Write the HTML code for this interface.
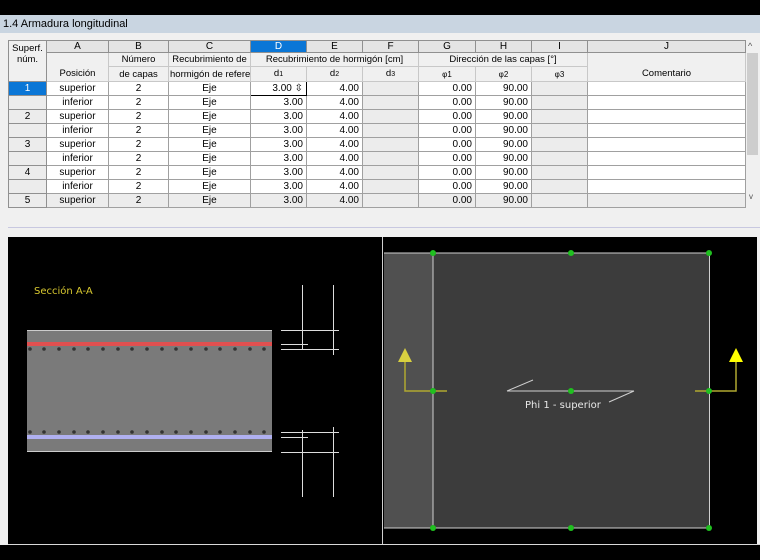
<!DOCTYPE html>
<html><head><meta charset="utf-8"><style>
*{margin:0;padding:0;box-sizing:border-box}
body{width:760px;height:560px;background:#000;position:relative;overflow:hidden;font-family:"Liberation Sans",sans-serif;font-size:10px;color:#000}
#title{position:absolute;left:0;top:15px;width:760px;height:18px;background:#c9d5e1;font-size:11px;line-height:18px;padding-left:3px}
#panel{position:absolute;left:0;top:33px;width:760px;height:512px;background:#f0f0f0}
table{position:absolute;left:8px;top:40px;width:737px;border-collapse:collapse;table-layout:fixed}
td{border:1px solid #a0a0a0;height:13.8px;padding:0 3px;white-space:nowrap;overflow:hidden;line-height:13px;text-align:center;background:#fff}
td.r{text-align:right}
td.g{background:#ececec}
td.h{background:#f0f0f0;border-color:#c8c8c8;font-size:9.5px;height:14px;padding:0 1px}
tr.L td{background:#e4e4e4;height:12px;line-height:11px;border-color:#909090}
td.sel{background:#0a76d6!important;color:#fff}
td.rh{background:#ececec;border-color:#909090}
#sb{position:absolute;left:746px;top:40px;width:13px;height:164px;background:#f0f0f0}
#sbt{position:absolute;left:747px;top:53px;width:11px;height:102px;background:#cdcdcd}
#sep{position:absolute;left:8px;top:227px;width:752px;height:1px;background:#c8c8e0}
svg{position:absolute;left:0;top:0}
</style></head><body>
<div id="title">1.4 Armadura longitudinal</div>
<div id="panel"></div>
<table>
<colgroup><col style="width:38px"><col style="width:62px"><col style="width:60px"><col style="width:82px"><col style="width:56px"><col style="width:56px"><col style="width:56px"><col style="width:57px"><col style="width:56px"><col style="width:56px"><col style="width:158px"></colgroup>
<tr class="L"><td rowspan="3" class="h" style="vertical-align:top;line-height:11px;padding-top:2px;background:#f0f0f0">Superf.<br>núm.</td><td>A</td><td>B</td><td>C</td><td class="sel">D</td><td>E</td><td>F</td><td>G</td><td>H</td><td>I</td><td>J</td></tr>
<tr><td class="h" rowspan="2" style="vertical-align:bottom;padding-bottom:1px">Posición</td><td class="h">Número</td><td class="h">Recubrimiento de</td><td class="h" colspan="3">Recubrimiento de hormigón [cm]</td><td class="h" colspan="3">Dirección de las capas [°]</td><td class="h" rowspan="2" style="vertical-align:bottom;padding-bottom:1px">Comentario</td></tr>
<tr><td class="h">de capas</td><td class="h">hormigón de referer</td><td class="h">d<span style="font-size:7px">1</span></td><td class="h">d<span style="font-size:7px">2</span></td><td class="h">d<span style="font-size:7px">3</span></td><td class="h" style="font-size:8px">φ1</td><td class="h" style="font-size:8px">φ2</td><td class="h" style="font-size:8px">φ3</td></tr>
<tr><td class="rh sel">1</td><td>superior</td><td>2</td><td>Eje</td><td class="r" style="border:1px solid #000">3.00 ⇳</td><td class="r">4.00</td><td class="g"></td><td class="r">0.00</td><td class="r">90.00</td><td class="g"></td><td></td></tr>
<tr><td class="rh"></td><td>inferior</td><td>2</td><td>Eje</td><td class="r">3.00</td><td class="r">4.00</td><td class="g"></td><td class="r">0.00</td><td class="r">90.00</td><td class="g"></td><td></td></tr>
<tr><td class="rh">2</td><td>superior</td><td>2</td><td>Eje</td><td class="r">3.00</td><td class="r">4.00</td><td class="g"></td><td class="r">0.00</td><td class="r">90.00</td><td class="g"></td><td></td></tr>
<tr><td class="rh"></td><td>inferior</td><td>2</td><td>Eje</td><td class="r">3.00</td><td class="r">4.00</td><td class="g"></td><td class="r">0.00</td><td class="r">90.00</td><td class="g"></td><td></td></tr>
<tr><td class="rh">3</td><td>superior</td><td>2</td><td>Eje</td><td class="r">3.00</td><td class="r">4.00</td><td class="g"></td><td class="r">0.00</td><td class="r">90.00</td><td class="g"></td><td></td></tr>
<tr><td class="rh"></td><td>inferior</td><td>2</td><td>Eje</td><td class="r">3.00</td><td class="r">4.00</td><td class="g"></td><td class="r">0.00</td><td class="r">90.00</td><td class="g"></td><td></td></tr>
<tr><td class="rh">4</td><td>superior</td><td>2</td><td>Eje</td><td class="r">3.00</td><td class="r">4.00</td><td class="g"></td><td class="r">0.00</td><td class="r">90.00</td><td class="g"></td><td></td></tr>
<tr><td class="rh"></td><td>inferior</td><td>2</td><td>Eje</td><td class="r">3.00</td><td class="r">4.00</td><td class="g"></td><td class="r">0.00</td><td class="r">90.00</td><td class="g"></td><td></td></tr>
<tr><td class="rh">5</td><td class="g">superior</td><td class="g">2</td><td class="g">Eje</td><td class="r g">3.00</td><td class="r g">4.00</td><td class="g"></td><td class="r g">0.00</td><td class="r g">90.00</td><td class="g"></td><td class="g"></td></tr>
</table>
<div id="sb"></div><div id="sbt"></div>
<div style="position:absolute;left:748px;top:41px;font-size:9px;color:#555">^</div>
<div style="position:absolute;left:749px;top:192px;font-size:8px;color:#555">v</div>
<div id="sep"></div>
<svg width="760" height="560" viewBox="0 0 760 560">
<rect x="8" y="237" width="374" height="307" fill="#000"/>
<rect x="383" y="237" width="374" height="307" fill="#000"/>
<line x1="382.5" y1="237" x2="382.5" y2="544" stroke="#d0d0d0"/>
<line x1="8" y1="544.5" x2="760" y2="544.5" stroke="#d8d8d8"/>
<text x="34" y="294" fill="#d8c830" font-size="10" font-family="DejaVu Sans">Sección A-A</text>
<rect x="27" y="330" width="245" height="122" fill="#7a7a7a"/>
<line x1="27" y1="330.5" x2="272" y2="330.5" stroke="#ccc"/>
<line x1="27" y1="451.5" x2="272" y2="451.5" stroke="#ccc"/>
<rect x="27" y="342" width="245" height="4" fill="#e05050"/>
<rect x="27" y="435" width="245" height="4" fill="#b0b0f0"/>
<g fill="#333">
<circle cx="30" cy="349" r="1.8"/><circle cx="44" cy="349" r="1.8"/><circle cx="59" cy="349" r="1.8"/><circle cx="74" cy="349" r="1.8"/><circle cx="88" cy="349" r="1.8"/><circle cx="103" cy="349" r="1.8"/><circle cx="118" cy="349" r="1.8"/><circle cx="132" cy="349" r="1.8"/><circle cx="147" cy="349" r="1.8"/><circle cx="162" cy="349" r="1.8"/><circle cx="176" cy="349" r="1.8"/><circle cx="191" cy="349" r="1.8"/><circle cx="206" cy="349" r="1.8"/><circle cx="220" cy="349" r="1.8"/><circle cx="235" cy="349" r="1.8"/><circle cx="250" cy="349" r="1.8"/><circle cx="264" cy="349" r="1.8"/>
<circle cx="30" cy="432" r="1.8"/><circle cx="44" cy="432" r="1.8"/><circle cx="59" cy="432" r="1.8"/><circle cx="74" cy="432" r="1.8"/><circle cx="88" cy="432" r="1.8"/><circle cx="103" cy="432" r="1.8"/><circle cx="118" cy="432" r="1.8"/><circle cx="132" cy="432" r="1.8"/><circle cx="147" cy="432" r="1.8"/><circle cx="162" cy="432" r="1.8"/><circle cx="176" cy="432" r="1.8"/><circle cx="191" cy="432" r="1.8"/><circle cx="206" cy="432" r="1.8"/><circle cx="220" cy="432" r="1.8"/><circle cx="235" cy="432" r="1.8"/><circle cx="250" cy="432" r="1.8"/><circle cx="264" cy="432" r="1.8"/>
</g>
<g stroke="#ddd" stroke-width="1">
<line x1="302.5" y1="285" x2="302.5" y2="350"/><line x1="333.5" y1="285" x2="333.5" y2="355"/>
<line x1="281" y1="330.5" x2="339" y2="330.5"/><line x1="281" y1="344.5" x2="308" y2="344.5"/><line x1="281" y1="349.5" x2="339" y2="349.5"/>
<line x1="302.5" y1="430" x2="302.5" y2="497"/><line x1="333.5" y1="427" x2="333.5" y2="497"/>
<line x1="281" y1="432.5" x2="339" y2="432.5"/><line x1="281" y1="437.5" x2="308" y2="437.5"/><line x1="281" y1="452.5" x2="339" y2="452.5"/>
</g>
<rect x="384" y="253" width="49" height="275" fill="#505050"/>
<rect x="433" y="253" width="277" height="275" fill="#3c3c3c"/>
<g stroke="#d0d0d0" fill="none">
<line x1="384" y1="253" x2="710" y2="253"/><line x1="384" y1="528" x2="710" y2="528"/>
<line x1="433" y1="253" x2="433" y2="528"/><line x1="709.5" y1="253" x2="709.5" y2="528"/>
<line x1="507" y1="391" x2="634" y2="391"/><line x1="507" y1="391" x2="533" y2="380"/><line x1="609" y1="402" x2="634" y2="391"/>
</g>
<g stroke="#b0a830" stroke-width="1.5" fill="none"><polyline points="405,360 405,391 447,391"/><polyline points="736,360 736,391 695,391"/></g>
<polygon points="405,348 398,362 412,362" fill="#d8d040"/>
<polygon points="736,348 729,362 743,362" fill="#ffff00"/>
<g fill="#20c020"><circle cx="433" cy="253" r="3"/><circle cx="571" cy="253" r="3"/><circle cx="709" cy="253" r="3"/><circle cx="433" cy="391" r="3"/><circle cx="571" cy="391" r="3"/><circle cx="709" cy="391" r="3"/><circle cx="433" cy="528" r="3"/><circle cx="571" cy="528" r="3"/><circle cx="709" cy="528" r="3"/></g>
<text x="525" y="408" fill="#e8e8e8" font-size="10" font-family="DejaVu Sans">Phi 1 - superior</text>
</svg>
</body></html>
